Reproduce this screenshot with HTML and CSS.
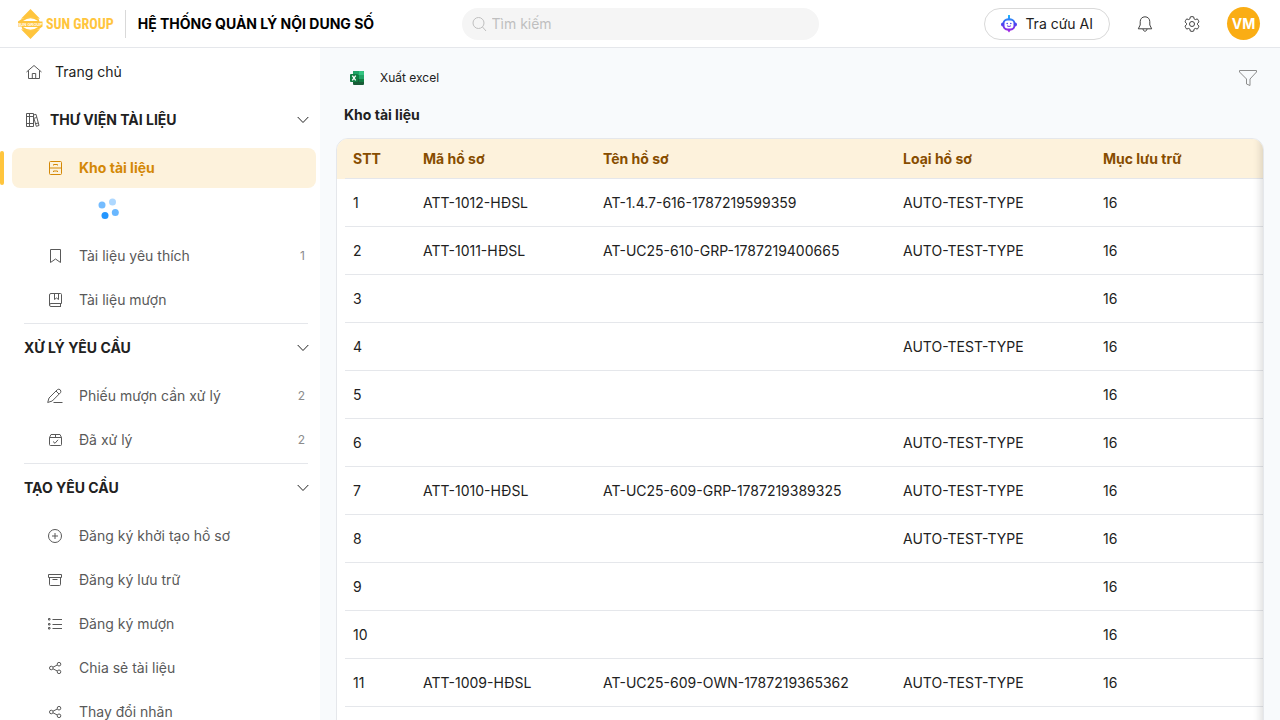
FILE: index.html
```html
<!DOCTYPE html>
<html lang="vi">
<head>
  <meta charset="UTF-8" />
  <meta name="viewport" content="width=device-width, initial-scale=1.0"/>
  <title>Hệ thống quản lý nội dung số</title>
  <link rel="stylesheet" href="styles.css">
</head>
<body>

  <header class="header">
    <div class="brand">
      <a href="#" class="logo">
        <svg class="logo-mark" viewBox="0 0 26 30" width="26" height="30" aria-hidden="true">
          <path d="M13.500 0 L23 9.800 Q13.500 7.500 4 9.800 Z"/>
          <path d="M13.500 30 L23 20.200 Q13.500 22.500 4 20.200 Z"/>
          <path d="M1 12.500 L5.500 9.500 Q13.500 7 21.500 9.500 L22.500 12.500 H25.500 V17.500 L21.500 20.500 Q13.500 23 5.500 20.500 L4.500 17.500 H1 Z M6 12 H21 Q13.500 6.500 6 12 Z M6 18 H21 Q13.500 23.500 6 18 Z" fill-rule="evenodd"/>
          <text x="13" y="17" text-anchor="middle">SUN GROUP</text>
        </svg>
        <span class="logo-text">SUN GROUP</span>
      </a>
      <h1 class="app-title">HỆ THỐNG QUẢN LÝ NỘI DUNG SỐ</h1>
    </div>

    <label class="search">
      <svg class="icon" viewBox="0 0 16 16" width="16" height="16" aria-hidden="true"><circle cx="6.500" cy="7" r="5.500"/><path d="M10.500 11 14 15"/></svg>
      <input type="search" placeholder="Tìm kiếm" aria-label="Tìm kiếm">
    </label>

    <div class="actions">
      <button type="button" class="ai-btn">
        <svg viewBox="0 0 16 18" width="16" height="18" aria-hidden="true">
          <defs>
            <linearGradient id="botFill" x1="0" y1="0" x2="0" y2="1">
              <stop offset="0" stop-color="#1ac0ff"/>
              <stop offset=".5" stop-color="#4a45f0"/>
              <stop offset="1" stop-color="#b020e0"/>
            </linearGradient>
          </defs>
          <path d="M7 0h2v3.200c3 .3 5 2 5.300 4.300C15.500 7.700 16 8.500 16 9.500s-.6 1.900-1.700 2C13.800 14 12 15.300 9.500 15.500L8 17.500l-1.500-2C4 15.300 2.200 14 1.700 11.500.6 11.400 0 10.500 0 9.500s.5-1.800 1.700-2C2 5.200 4 3.500 7 3.200Z" fill="url(#botFill)"/>
          <rect x="3.500" y="5.500" width="9" height="8" rx="3" fill="#fff"/>
          <circle cx="6.200" cy="8.500" r=".8" fill="#4a45f0"/><circle cx="9.800" cy="8.500" r=".8" fill="#4a45f0"/>
          <path d="M6 10.800q2 1.400 4 0" fill="none" stroke="#6a35e8"/>
        </svg>
        Tra cứu AI
      </button>
      <button type="button" class="icon-btn" aria-label="Thông báo">
        <svg class="icon" viewBox="0 0 16 16" width="16" height="16" aria-hidden="true"><path d="M8 .8C5 .8 3.200 3 3.200 5.700V9L1.300 12.800H14.700L12.800 9V5.700C12.800 3 11 .8 8 .8ZM6 13c.2 1.400 1 2.200 2 2.200s1.800-.8 2-2.200"/></svg>
      </button>
      <button type="button" class="icon-btn" aria-label="Cài đặt">
        <svg class="icon" viewBox="0 0 16 16" width="16" height="16" aria-hidden="true"><circle cx="8" cy="8" r="2.500"/><path d="M6.300 .9Q8 .3 9.700 .9L10.100 2.900 11.300 3.600 13.300 2.900Q14.500 4.200 15 5.900L13.500 7.300V8.700L15 10.100Q14.500 11.800 13.300 13.100L11.300 12.400 10.100 13.100 9.700 15.100Q8 15.700 6.300 15.100L5.900 13.100 4.700 12.400 2.700 13.100Q1.500 11.800 1 10.100L2.500 8.700V7.300L1 5.900Q1.500 4.200 2.700 2.900L4.700 3.600 5.900 2.900Z"/></svg>
      </button>
      <button type="button" class="avatar">VM</button>
    </div>
  </header>

  <div class="layout">
    <nav class="sidebar">
      <a href="#" class="home-link">
        <svg class="icon" viewBox="0 0 16 16" width="16" height="16" aria-hidden="true"><path d="M.5 8 8 1.500 15.500 8M2.500 6.500V14.500H13.500V6.500M6.300 14.500V9.500H9.700V14.500"/></svg>
        Trang chủ
      </a>

      <section class="menu-group">
        <button type="button" class="menu-title">
          <svg class="icon" viewBox="0 0 16 16" width="16" height="16" aria-hidden="true"><path d="M2.500 1.500H9.500V14.500H2.500ZM5.500 1.500V14.500M2.500 4.500H9.500M2.500 11.500H9.500M9.500 3 12 2.300 15 13.500 12.300 14.300 9.500 5M10.300 6.200 12.700 5.500M11.500 11.700 14.200 11"/></svg>
          <span>THƯ VIỆN TÀI LIỆU</span>
          <svg class="icon chevron" viewBox="0 0 12 8" width="12" height="8" aria-hidden="true"><path d="M.7 1 6 6.500 11.300 1"/></svg>
        </button>
        <ul class="menu">
          <li class="active">
            <a href="#">
              <svg class="icon" viewBox="0 0 16 16" width="16" height="16" aria-hidden="true"><rect x="2.500" y="1.500" width="12" height="13" rx="1"/><path d="M2.500 8H14.500M6.500 5.500V4.500H10.500V5.500M6.500 12V11H10.500V12"/></svg>
              <span>Kho tài liệu</span>
            </a>
          </li>
          <li class="loading">
            <svg viewBox="0 0 22 22" width="22" height="22" aria-label="Đang tải">
              <circle cx="5" cy="7" r="3.500" opacity=".6"/>
              <circle cx="15.500" cy="4" r="3.500" opacity=".35"/>
              <circle cx="18.300" cy="14.500" r="3.500" opacity=".65"/>
              <circle cx="8" cy="17.500" r="3.500" opacity=".95"/>
            </svg>
          </li>
          <li>
            <a href="#">
              <svg class="icon" viewBox="0 0 16 16" width="16" height="16" aria-hidden="true"><path d="M3.500 1.500H13.500V14.500L8.500 11 3.500 14.500Z"/></svg>
              <span>Tài liệu yêu thích</span>
              <span class="count">1</span>
            </a>
          </li>
          <li>
            <a href="#">
              <svg class="icon" viewBox="0 0 16 16" width="16" height="16" aria-hidden="true"><path d="M14.500 11.500V2.500Q14.500 1.500 13.500 1.500H4Q2.500 1.500 2.500 3V13Q2.500 14.500 4 14.500H14M14.500 11.500H4Q2.500 11.500 2.500 13M13.500 11.500V14.500M7.500 1.500V7.500L9.500 6 11.500 7.500V1.500"/></svg>
              <span>Tài liệu mượn</span>
            </a>
          </li>
        </ul>
      </section>

      <section class="menu-group">
        <button type="button" class="menu-title">
          <span>XỬ LÝ YÊU CẦU</span>
          <svg class="icon chevron" viewBox="0 0 12 8" width="12" height="8" aria-hidden="true"><path d="M.7 1 6 6.500 11.300 1"/></svg>
        </button>
        <ul class="menu">
          <li>
            <a href="#">
              <svg class="icon" viewBox="0 0 16 16" width="16" height="16" aria-hidden="true"><path d="M.7 14.500 2 10 10.300 1.700Q12 .5 13.200 1.800T13.500 4.700L5.200 13ZM9 3 12 6M6.500 14.500H15.500"/></svg>
              <span>Phiếu mượn cần xử lý</span>
              <span class="count">2</span>
            </a>
          </li>
          <li>
            <a href="#">
              <svg class="icon" viewBox="0 0 16 16" width="16" height="16" aria-hidden="true"><path d="M2.500 5.500 4 2.500H13L14.500 5.500V12.500Q14.500 13.500 13.500 13.500H3.500Q2.500 13.500 2.500 12.500ZM2.500 5.500H14.500M8.500 2.500V5.500M6 9.500 8 11.300 11 7.800"/></svg>
              <span>Đã xử lý</span>
              <span class="count">2</span>
            </a>
          </li>
        </ul>
      </section>

      <section class="menu-group">
        <button type="button" class="menu-title">
          <span>TẠO YÊU CẦU</span>
          <svg class="icon chevron" viewBox="0 0 12 8" width="12" height="8" aria-hidden="true"><path d="M.7 1 6 6.500 11.300 1"/></svg>
        </button>
        <ul class="menu">
          <li>
            <a href="#">
              <svg class="icon" viewBox="0 0 16 16" width="16" height="16" aria-hidden="true"><circle cx="8" cy="8" r="6.500"/><path d="M8 5V11M5 8H11"/></svg>
              <span>Đăng ký khởi tạo hồ sơ</span>
            </a>
          </li>
          <li>
            <a href="#">
              <svg class="icon" viewBox="0 0 16 16" width="16" height="16" aria-hidden="true"><path d="M1.500 2.500H14.500V5.500H1.500ZM2.500 5.500V12.500Q2.500 13.500 3.500 13.500H12.500Q13.500 13.500 13.500 12.500V5.500M5.500 7.500H10.500"/></svg>
              <span>Đăng ký lưu trữ</span>
            </a>
          </li>
          <li>
            <a href="#">
              <svg class="icon" viewBox="0 0 16 16" width="16" height="16" aria-hidden="true"><path d="M5.500 3.500H15M5.500 8.500H15M5.500 12.500H15M1.500 2.500H3V4H1.500ZM1.500 7.500H3V9H1.500ZM1.500 11.500H3V13H1.500Z"/></svg>
              <span>Đăng ký mượn</span>
            </a>
          </li>
          <li>
            <a href="#">
              <svg class="icon" viewBox="0 0 16 16" width="16" height="16" aria-hidden="true"><circle cx="4.300" cy="8" r="1.800"/><circle cx="12" cy="4.200" r="1.800"/><circle cx="12" cy="11.800" r="1.800"/><path d="M6 7.200 10.300 5M6 8.800 10.300 11"/></svg>
              <span>Chia sẻ tài liệu</span>
            </a>
          </li>
          <li>
            <a href="#">
              <svg class="icon" viewBox="0 0 16 16" width="16" height="16" aria-hidden="true"><circle cx="4.300" cy="8" r="1.800"/><circle cx="12" cy="4.200" r="1.800"/><circle cx="12" cy="11.800" r="1.800"/><path d="M6 7.200 10.300 5M6 8.800 10.300 11"/></svg>
              <span>Thay đổi nhãn</span>
            </a>
          </li>
        </ul>
      </section>
    </nav>

    <main class="content">
      <div class="toolbar">
        <button type="button" class="export-btn">
          <svg viewBox="0 0 14 14" width="14" height="14" aria-hidden="true">
            <rect x="3" width="11" height="14" rx="1" fill="#185c37"/>
            <path d="M3 1q0-1 1-1h5v4H3Z" fill="#21a366"/>
            <path d="M9 0h4q1 0 1 1v3H9Z" fill="#33c481"/>
            <path d="M9 4h5v4H9Z" fill="#21a366"/>
            <path d="M3 4h6v4H3Z" fill="#107c41"/>
            <path d="M9 8h5v3H9Z" fill="#107c41"/>
            <rect y="3" width="8" height="8" rx="1" fill="#107c41"/>
            <path d="M2.300 4.700 5.700 9.300M5.700 4.700 2.300 9.300" stroke="#fff" stroke-width="1.300"/>
          </svg>
          Xuất excel
        </button>
        <button type="button" class="icon-btn filter-btn" aria-label="Bộ lọc">
          <svg class="icon" viewBox="0 0 20 18" width="20" height="18" aria-hidden="true"><path d="M1.500 1.500H18.500V3L12 10V16.500L8.500 15V10L1.500 3Z"/></svg>
        </button>
      </div>
      <h2 class="page-title">Kho tài liệu</h2>

      <div class="table-card">
        <table>
          <colgroup>
            <col class="col-no"><col class="col-code"><col class="col-name"><col class="col-type"><col>
          </colgroup>
          <thead>
            <tr><th>STT</th><th>Mã hồ sơ</th><th>Tên hồ sơ</th><th>Loại hồ sơ</th><th>Mục lưu trữ</th></tr>
          </thead>
          <tbody>
            <tr><td>1</td><td>ATT-1012-HĐSL</td><td>AT-1.4.7-616-1787219599359</td><td>AUTO-TEST-TYPE</td><td>16</td></tr>
            <tr><td>2</td><td>ATT-1011-HĐSL</td><td>AT-UC25-610-GRP-1787219400665</td><td>AUTO-TEST-TYPE</td><td>16</td></tr>
            <tr><td>3</td><td></td><td></td><td></td><td>16</td></tr>
            <tr><td>4</td><td></td><td></td><td>AUTO-TEST-TYPE</td><td>16</td></tr>
            <tr><td>5</td><td></td><td></td><td></td><td>16</td></tr>
            <tr><td>6</td><td></td><td></td><td>AUTO-TEST-TYPE</td><td>16</td></tr>
            <tr><td>7</td><td>ATT-1010-HĐSL</td><td>AT-UC25-609-GRP-1787219389325</td><td>AUTO-TEST-TYPE</td><td>16</td></tr>
            <tr><td>8</td><td></td><td></td><td>AUTO-TEST-TYPE</td><td>16</td></tr>
            <tr><td>9</td><td></td><td></td><td></td><td>16</td></tr>
            <tr><td>10</td><td></td><td></td><td></td><td>16</td></tr>
            <tr><td>11</td><td>ATT-1009-HĐSL</td><td>AT-UC25-609-OWN-1787219365362</td><td>AUTO-TEST-TYPE</td><td>16</td></tr>
            <tr><td></td><td></td><td></td><td></td><td></td></tr>
          </tbody>
        </table>
      </div>
    </main>
  </div>

</body>
</html>
```
FILE: styles.css
```css
* {
  box-sizing: border-box;
  margin: 0;
  padding: 0;
}

body {
  font-family: Inter, sans-serif;
  font-size: 14px;
  line-height: 22px;
  color: #212121;
  background-color: #f8fafc;
  display: flex;
  flex-direction: column;
  height: 100vh;
  overflow: hidden;
}

a {
  color: inherit;
  text-decoration: none;
}

button,
input {
  font: inherit;
  color: inherit;
  background: none;
  border: none;
}

button {
  cursor: pointer;
}

ul {
  list-style: none;
}

svg {
  flex-shrink: 0;
}

.icon {
  fill: none;
  stroke: currentColor;
  stroke-width: 1;
  stroke-linejoin: round;
}

/* Header */
.header {
  display: grid;
  grid-template-columns: 1fr minmax(200px, 357px) 1fr;
  align-items: center;
  flex-shrink: 0;
  height: 48px;
  background-color: #ffffff;
  border-bottom: 1px solid #e5e7eb;
}

.brand {
  display: flex;
  align-items: center;
  gap: 12px;
  padding-left: 17px;
  white-space: nowrap;
}

.logo {
  display: flex;
  align-items: center;
  gap: 3px;
  padding-right: 11px;
  height: 28px;
  border-right: 1px solid #d9d9d9;
  color: #ffc53d;
}

.logo-mark {
  fill: #ffc53d;
}

.logo-mark text {
  font: bold 4px "Liberation Sans Narrow", "Liberation Sans", sans-serif;
  fill: #ffffff;
}

.logo-text {
  font: bold 14px "Liberation Sans Narrow", "Roboto Condensed", "Liberation Sans", sans-serif;
}

.app-title {
  font-size: 14px;
  font-weight: 700;
  color: #000000;
}

.search {
  display: flex;
  align-items: center;
  gap: 4px;
  height: 32px;
  padding: 0 10px;
  border-radius: 16px;
  background-color: #f5f5f5;
  color: #bfbfbf;
}

.search input {
  flex: 1;
  min-width: 0;
  outline: none;
  color: #212121;
}

.search input::placeholder {
  color: #bfbfbf;
}

.actions {
  display: flex;
  align-items: center;
  justify-content: flex-end;
  gap: 15px;
  padding-right: 20px;
}

.ai-btn {
  display: flex;
  align-items: center;
  gap: 8px;
  height: 32px;
  padding: 0 16px;
  margin-right: 4px;
  border: 1px solid #d9d9d9;
  border-radius: 16px;
  white-space: nowrap;
}

.icon-btn {
  display: flex;
  align-items: center;
  justify-content: center;
  width: 32px;
  height: 32px;
  color: #424242;
}

.avatar {
  width: 33px;
  height: 33px;
  margin-left: 4px;
  border-radius: 50%;
  background-color: #faad14;
  color: #ffffff;
  font-weight: 700;
}

/* Sidebar */
.layout {
  display: flex;
  flex: 1;
  min-height: 0;
}

.sidebar {
  flex: 0 0 320px;
  padding: 4px 4px 0 12px;
  background-color: #ffffff;
  overflow: hidden;
}

.home-link {
  display: flex;
  align-items: center;
  gap: 13px;
  height: 40px;
  padding-left: 14px;
  margin-bottom: 8px;
}

.home-link .icon,
.menu-title .icon {
  color: #595959;
}

.menu-group {
  margin-bottom: 4px;
}

.menu-group::after {
  content: "";
  display: block;
  height: 1px;
  margin: 3px 8px 0 12px;
  background-color: #e5e7eb;
}

.menu-title {
  display: flex;
  align-items: center;
  gap: 10px;
  width: 100%;
  height: 40px;
  padding: 0 7px 0 12px;
  margin-bottom: 8px;
  font-weight: 700;
}

.menu-title .chevron {
  margin-left: auto;
  color: #212121;
}

.menu {
  display: flex;
  flex-direction: column;
  gap: 4px;
}

.menu li {
  display: flex;
  align-items: center;
  height: 40px;
}

.menu a {
  display: flex;
  align-items: center;
  flex: 1;
  gap: 16px;
  height: 40px;
  padding: 0 11px 0 35px;
  border-radius: 8px;
  color: #595959;
}

.menu .active::before {
  content: "";
  width: 4px;
  height: 34px;
  margin: 0 8px 0 -12px;
  border-radius: 2px;
  background-color: #ffc53d;
}

.menu .active a {
  background-color: #fdf2dc;
  color: #d48806;
  font-weight: 700;
}

.menu .loading {
  padding: 0 0 6px 85px;
  fill: #1890ff;
}

.count {
  margin-left: auto;
  font-size: 12px;
  color: #8c8c8c;
}

/* Content */
.content {
  flex: 1;
  min-width: 0;
  padding: 14px 16px 0;
}

.toolbar {
  display: flex;
  align-items: center;
  justify-content: space-between;
  height: 32px;
  padding-left: 14px;
}

.export-btn {
  display: flex;
  align-items: center;
  gap: 16px;
  font-size: 12px;
}

.filter-btn {
  color: #8c8c8c;
}

.page-title {
  margin: 10px 8px 12px;
  font-size: 14px;
  font-weight: 700;
}

.table-card {
  position: relative;
  padding-left: 8px;
  border: 1px solid #e5e7eb;
  border-radius: 12px;
  background-color: #ffffff;
  overflow: hidden;
}

.table-card::after {
  content: "";
  position: absolute;
  inset: 0;
  box-shadow: inset -10px 0 8px -8px rgba(0, 0, 0, 0.15);
  pointer-events: none;
}

table {
  width: 100%;
  table-layout: fixed;
  border-collapse: separate;
  border-spacing: 0;
}

.col-no {
  width: 70px;
}

.col-code {
  width: 180px;
}

.col-name {
  width: 300px;
}

.col-type {
  width: 200px;
}

th,
td {
  height: 48px;
  padding: 0 8px;
  border-bottom: 1px solid #e5e7eb;
  text-align: left;
  white-space: nowrap;
}

th {
  height: 40px;
  background-color: #fdf2dc;
  color: #874d00;
  font-weight: 700;
}

th:first-child {
  box-shadow: -8px 0 0 #fdf2dc;
}
```
